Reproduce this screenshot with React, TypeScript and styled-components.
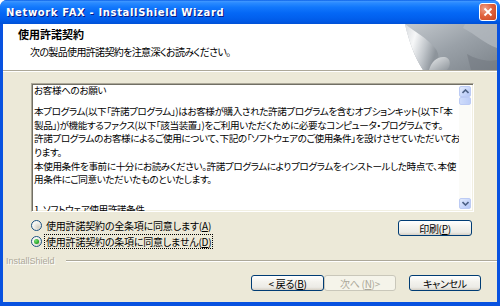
import styled, { createGlobalStyle } from "styled-components";

const Global = createGlobalStyle`
  html, body {
    margin: 0;
    padding: 0;
    background: #ffffff;
  }
  body {
    width: 500px;
    height: 306px;
    overflow: hidden;
  }
`;

const jp = `"Noto Sans CJK JP", "Noto Sans", sans-serif`;

const Window = styled.div`
  width: 500px;
  height: 306px;
  box-sizing: border-box;
  display: flex;
  flex-direction: column;
  background: #0852e0;
  border-radius: 7px 7px 0 0;
  overflow: hidden;
`;

const TitleBar = styled.div`
  height: 24px;
  flex: none;
  display: flex;
  align-items: center;
  padding: 0 3px 0 6px;
  background: linear-gradient(
    #0a5fe6 0%,
    #3d95ff 6%,
    #2a8bff 12%,
    #1278fc 30%,
    #0467f5 55%,
    #0260ee 75%,
    #0058e4 90%,
    #0050d6 100%
  );
`;

const TitleText = styled.span`
  font-family: "DejaVu Sans", Verdana, sans-serif;
  font-weight: bold;
  font-size: 10px;
  letter-spacing: 0.65px;
  color: #ffffff;
  text-shadow: 1px 1px #0a1883;
`;

const CloseButton = styled.div`
  margin-left: auto;
  width: 18px;
  height: 18px;
  box-sizing: border-box;
  border: 1px solid #ffffff;
  border-radius: 3px;
  background: radial-gradient(circle at 30% 30%, #f0a28a 0%, #e0633e 45%, #c9431f 100%);
  display: flex;
  align-items: center;
  justify-content: center;
`;

const Client = styled.div`
  flex: 1;
  margin: 0 3px 4px 3px;
  background: #ece9d8;
  display: flex;
  flex-direction: column;
`;

const Header = styled.div`
  height: 46px;
  flex: none;
  display: flex;
  background: #ffffff;
  border-bottom: 1px solid #aca899;
  box-shadow: 0 1px 0 #ffffff;
`;

const HeaderText = styled.div`
  flex: 1;
  padding: 3px 0 0 15px;
  font-family: ${jp};
  font-feature-settings: "palt";
  color: #000000;
`;

const HeaderTitle = styled.div`
  font-size: 11px;
  font-weight: bold;
  line-height: 14px;
`;

const HeaderSub = styled.div`
  font-size: 10px;
  line-height: 14px;
  letter-spacing: -0.65px;
  margin: 4px 0 0 12px;
`;

const Content = styled.div`
  padding: 12px 23px 0 28px;
`;

const LicenseBox = styled.div`
  width: 443px;
  height: 129px;
  box-sizing: border-box;
  display: flex;
  background: #ffffff;
  border-top: 1px solid #aca899;
  border-left: 1px solid #aca899;
  border-right: 1px solid #ffffff;
  border-bottom: 1px solid #ffffff;
  box-shadow: inset 1px 1px 0 #716f64, inset -1px -1px 0 #f1efe2;
`;

const LicenseText = styled.div`
  flex: 1;
  overflow: hidden;
  padding: 0 0 0 2px;
  font-family: ${jp};
  font-feature-settings: "palt";
  font-size: 9.6px;
  letter-spacing: -0.4px;
  line-height: 13.6px;
  color: #000000;
`;

const TextLine = styled.div<{ $h?: number }>`
  white-space: nowrap;
  height: ${(p) => p.$h ?? 13.6}px;
`;

const ScrollBar = styled.div`
  width: 12px;
  flex: none;
  margin: 2px 2px 2px 0;
  display: flex;
  flex-direction: column;
  background: #fbfbf8;
`;

const ScrollButton = styled.div`
  height: 11px;
  box-sizing: border-box;
  border: 1px solid #bccbf4;
  border-radius: 2px;
  background: linear-gradient(135deg, #e4ecfd 0%, #c6d5fa 60%, #b4c6f6 100%);
  display: flex;
  align-items: center;
  justify-content: center;
`;

const ScrollThumb = styled.div`
  height: 8px;
  box-sizing: border-box;
  border: 1px solid #bccbf4;
  border-radius: 2px;
  background: linear-gradient(90deg, #cfdcfb, #bccdf8);
`;

const ScrollTrack = styled.div`
  flex: 1;
`;

const OptionsRow = styled.div`
  display: flex;
  justify-content: space-between;
  align-items: flex-start;
  margin-top: 5px;
  padding-right: 2px;
`;

const RadioGroup = styled.div`
  display: flex;
  flex-direction: column;
`;

const RadioRow = styled.label`
  display: flex;
  align-items: center;
  height: 16px;
  font-family: ${jp};
  font-feature-settings: "palt";
  font-size: 10px;
  letter-spacing: -0.2px;
  color: #000000;
`;

const RadioMark = styled.span<{ $checked?: boolean }>`
  width: 11px;
  height: 11px;
  box-sizing: border-box;
  border-radius: 50%;
  border: 1px solid #1c5180;
  background: radial-gradient(circle at 70% 70%, #d4d0c4 0%, #f4f3ee 55%, #ffffff 100%);
  display: flex;
  align-items: center;
  justify-content: center;
  margin-right: 2px;

  &::after {
    content: "";
    display: ${(p) => (p.$checked ? "block" : "none")};
    width: 5px;
    height: 5px;
    border-radius: 50%;
    background: radial-gradient(circle at 35% 35%, #77e077 0%, #21a121 70%, #107010 100%);
  }
`;

const RadioLabel = styled.span<{ $focused?: boolean }>`
  line-height: 13px;
  padding: 0 1px;
  border: 1px dotted ${(p) => (p.$focused ? "#000000" : "transparent")};
`;

const Key = styled.span`
  text-decoration: underline;
`;

const PushButton = styled.div<{ $disabled?: boolean; $width?: number }>`
  width: ${(p) => p.$width ?? 73}px;
  height: 16px;
  box-sizing: border-box;
  display: flex;
  align-items: center;
  justify-content: center;
  border-radius: 3px;
  font-family: ${jp};
  font-feature-settings: "palt";
  font-size: 10px;
  letter-spacing: -0.3px;
  border: 1px solid ${(p) => (p.$disabled ? "#c9c7ba" : "#003c74")};
  color: ${(p) => (p.$disabled ? "#aca899" : "#000000")};
  background: ${(p) =>
    p.$disabled
      ? "#f5f4ea"
      : "linear-gradient(#ffffff 0%, #f4f3ee 40%, #ecebe6 80%, #d6d0c5 100%)"};
`;

const PrintButton = styled(PushButton)`
  margin-top: 3px;
`;

const Footer = styled.div`
  display: flex;
  flex-direction: column;
  margin-top: 5px;
`;

const BrandRow = styled.div`
  display: flex;
  align-items: center;
  height: 14px;
  padding-left: 3px;
`;

const BrandName = styled.span`
  font-family: "Liberation Sans", Arial, sans-serif;
  font-size: 9px;
  color: #aca899;
  text-shadow: 1px 1px 0 #ffffff;
`;

const BrandRule = styled.div`
  flex: 1;
  margin-left: 11px;
  border-top: 1px solid #aca899;
  border-bottom: 1px solid #ffffff;
`;

const ButtonRow = styled.div`
  display: flex;
  justify-content: flex-end;
  gap: 13px;
  padding: 7px 16px 0 0;
`;

const ButtonPair = styled.div`
  display: flex;
`;

const Arrow = ({ up }: { up?: boolean }) => (
  <svg width="7" height="5" viewBox="0 0 7 5">
    <path
      d={up ? "M0.5 4 L3.5 1 L6.5 4" : "M0.5 1 L3.5 4 L6.5 1"}
      fill="none"
      stroke="#4d6185"
      strokeWidth="1.6"
    />
  </svg>
);

const HeaderArt = () => (
  <svg width="92" height="46" viewBox="0 0 92 46">
    <defs>
      <linearGradient id="bgG" x1="0" y1="0" x2="1" y2="1">
        <stop offset="0" stopColor="#c4c9ce" />
        <stop offset="0.5" stopColor="#9aa1a8" />
        <stop offset="1" stopColor="#7d848b" />
      </linearGradient>
      <linearGradient id="curlG" x1="0" y1="0" x2="1" y2="0.4">
        <stop offset="0" stopColor="#d8dbde" />
        <stop offset="0.35" stopColor="#f6f7f8" />
        <stop offset="0.7" stopColor="#c0c5ca" />
        <stop offset="1" stopColor="#8d949b" />
      </linearGradient>
      <linearGradient id="rollG" x1="0" y1="0" x2="1" y2="1">
        <stop offset="0" stopColor="#e8eaec" />
        <stop offset="1" stopColor="#8f969c" />
      </linearGradient>
    </defs>
    <path d="M0 0 C4 18 10 34 18 46 L92 46 L92 0 Z" fill="url(#bgG)" />
    <path d="M58 4 C70 10 80 20 92 24 L92 0 L60 0 Z" fill="#b6bcc2" opacity="0.7" />
    <path d="M62 30 C72 36 84 38 92 36 L92 46 L66 46 Z" fill="#6f767d" opacity="0.5" />
    <path
      d="M0 0 C10 8 22 14 30 24 C36 31 34 40 26 46 L18 46 C10 34 4 18 0 0 Z"
      fill="url(#curlG)"
    />
    <path d="M24 46 C26 38 32 32 40 33 C46 34 46 42 42 46 Z" fill="url(#rollG)" />
  </svg>
);

export default function App() {
  return (
    <>
      <Global />
      <Window>
        <TitleBar>
          <TitleText>Network FAX - InstallShield Wizard</TitleText>
          <CloseButton>
            <svg width="10" height="10" viewBox="0 0 10 10">
              <path d="M1.5 1.5 L8.5 8.5 M8.5 1.5 L1.5 8.5" stroke="#ffffff" strokeWidth="1.8" />
            </svg>
          </CloseButton>
        </TitleBar>
        <Client>
          <Header>
            <HeaderText>
              <HeaderTitle>使用許諾契約</HeaderTitle>
              <HeaderSub>次の製品使用許諾契約を注意深くお読みください。</HeaderSub>
            </HeaderText>
            <HeaderArt />
          </Header>
          <Content>
            <LicenseBox>
              <LicenseText>
                <TextLine $h={12}>お客様へのお願い</TextLine>
                <TextLine $h={9.2} />
                <TextLine>
                  本プログラム(以下「許諾プログラム」)はお客様が購入された許諾プログラムを含むオプションキット(以下「本
                </TextLine>
                <TextLine>
                  製品」)が機能するファクス(以下「該当装置」)をご利用いただくために必要なコンピュータ・プログラムです。
                </TextLine>
                <TextLine>
                  許諾プログラムのお客様によるご使用について、下記の「ソフトウェアのご使用条件」を設けさせていただいてお
                </TextLine>
                <TextLine>ります。</TextLine>
                <TextLine>
                  本使用条件を事前に十分にお読みください。許諾プログラムによりプログラムをインストールした時点で、本使
                </TextLine>
                <TextLine>用条件にご同意いただいたものといたします。</TextLine>
                <TextLine $h={16.6} />
                <TextLine>1. ソフトウェア使用許諾条件</TextLine>
              </LicenseText>
              <ScrollBar>
                <ScrollButton>
                  <Arrow up />
                </ScrollButton>
                <ScrollThumb />
                <ScrollTrack />
                <ScrollButton>
                  <Arrow />
                </ScrollButton>
              </ScrollBar>
            </LicenseBox>
            <OptionsRow>
              <RadioGroup>
                <RadioRow>
                  <RadioMark />
                  <RadioLabel>
                    使用許諾契約の全条項に同意します(<Key>A</Key>)
                  </RadioLabel>
                </RadioRow>
                <RadioRow>
                  <RadioMark $checked />
                  <RadioLabel $focused>
                    使用許諾契約の条項に同意しません(<Key>D</Key>)
                  </RadioLabel>
                </RadioRow>
              </RadioGroup>
              <PrintButton $width={74}>
                印刷(<Key>P</Key>)
              </PrintButton>
            </OptionsRow>
          </Content>
          <Footer>
            <BrandRow>
              <BrandName>InstallShield</BrandName>
              <BrandRule />
            </BrandRow>
            <ButtonRow>
              <ButtonPair>
                <PushButton $width={73}>
                  &lt; 戻る(<Key>B</Key>)
                </PushButton>
                <PushButton $width={72} $disabled>
                  次へ (<Key>N</Key>)&gt;
                </PushButton>
              </ButtonPair>
              <PushButton $width={72}>キャンセル</PushButton>
            </ButtonRow>
          </Footer>
        </Client>
      </Window>
    </>
  );
}
